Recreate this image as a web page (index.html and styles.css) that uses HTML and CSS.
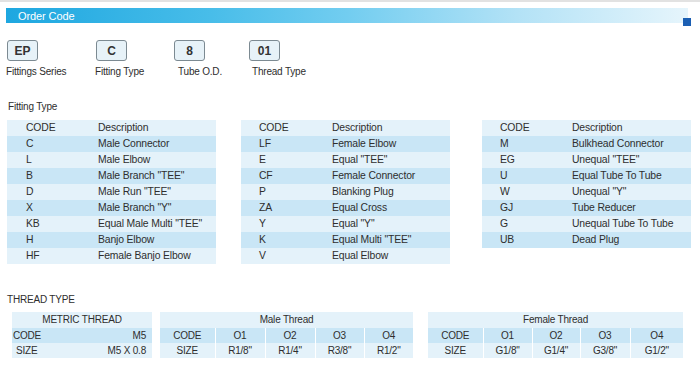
FILE: index.html
```html
<!DOCTYPE html>
<html>
<head>
<meta charset="utf-8">
<link rel="stylesheet" href="styles.css">
</head>
<body>
<div class="topline"></div>
<div class="header"><span class="header-title">Order Code</span><span class="header-mark"></span></div>

<div class="codes">
  <div class="code-item w1"><div class="code-box">EP</div><div class="code-label">Fittings Series</div></div>
  <div class="code-item w2"><div class="code-box">C</div><div class="code-label">Fitting Type</div></div>
  <div class="code-item w3"><div class="code-box">8</div><div class="code-label l3">Tube O.D.</div></div>
  <div class="code-item"><div class="code-box">01</div><div class="code-label l4">Thread Type</div></div>
</div>

<div class="section-title ft">Fitting Type</div>
<div class="fit-tables">
  <table class="fit t1">
    <tr><td>CODE</td><td>Description</td></tr>
    <tr><td>C</td><td>Male Connector</td></tr>
    <tr><td>L</td><td>Male Elbow</td></tr>
    <tr><td>B</td><td>Male Branch "TEE"</td></tr>
    <tr><td>D</td><td>Male Run "TEE"</td></tr>
    <tr><td>X</td><td>Male Branch "Y"</td></tr>
    <tr><td>KB</td><td>Equal Male Multi "TEE"</td></tr>
    <tr><td>H</td><td>Banjo Elbow</td></tr>
    <tr><td>HF</td><td>Female Banjo Elbow</td></tr>
  </table>
  <table class="fit t2">
    <tr><td>CODE</td><td>Description</td></tr>
    <tr><td>LF</td><td>Female Elbow</td></tr>
    <tr><td>E</td><td>Equal "TEE"</td></tr>
    <tr><td>CF</td><td>Female Connector</td></tr>
    <tr><td>P</td><td>Blanking Plug</td></tr>
    <tr><td>ZA</td><td>Equal Cross</td></tr>
    <tr><td>Y</td><td>Equal "Y"</td></tr>
    <tr><td>K</td><td>Equal Multi "TEE"</td></tr>
    <tr><td>V</td><td>Equal Elbow</td></tr>
  </table>
  <table class="fit t3">
    <tr><td>CODE</td><td>Description</td></tr>
    <tr><td>M</td><td>Bulkhead Connector</td></tr>
    <tr><td>EG</td><td>Unequal "TEE"</td></tr>
    <tr><td>U</td><td>Equal Tube To Tube</td></tr>
    <tr><td>W</td><td>Unequal "Y"</td></tr>
    <tr><td>GJ</td><td>Tube Reducer</td></tr>
    <tr><td>G</td><td>Unequal Tube To Tube</td></tr>
    <tr><td>UB</td><td>Dead Plug</td></tr>
  </table>
</div>

<div class="section-title tt">THREAD TYPE</div>
<div class="thread-tables">
  <table class="thr metric">
    <tr class="hd"><td colspan="2">METRIC THREAD</td></tr>
    <tr class="dk"><td class="ml">CODE</td><td class="mr">M5</td></tr>
    <tr class="lt"><td class="ml s">SIZE</td><td class="mr">M5 X 0.8</td></tr>
  </table>
  <table class="thr male">
    <colgroup><col class="c55"><col class="c50"><col class="c50"><col class="c49"><col class="c49"></colgroup>
    <tr class="hd"><td colspan="5">Male Thread</td></tr>
    <tr class="dk"><td>CODE</td><td>O1</td><td>O2</td><td>O3</td><td>O4</td></tr>
    <tr class="lt"><td>SIZE</td><td>R1/8"</td><td>R1/4"</td><td>R3/8"</td><td>R1/2"</td></tr>
  </table>
  <table class="thr female">
    <colgroup><col class="c55"><col class="c49"><col class="c48"><col class="c50"><col class="c53"></colgroup>
    <tr class="hd"><td colspan="5">Female Thread</td></tr>
    <tr class="dk"><td>CODE</td><td>O1</td><td>O2</td><td>O3</td><td>O4</td></tr>
    <tr class="lt"><td>SIZE</td><td>G1/8"</td><td>G1/4"</td><td>G3/8"</td><td>G1/2"</td></tr>
  </table>
</div>
</body>
</html>
```

FILE: styles.css
```css
html, body {
  margin: 0;
  padding: 0;
  background: #ffffff;
}
body {
  width: 700px;
  height: 378px;
  overflow: hidden;
  font-family: "Liberation Sans", Arial, sans-serif;
  color: #2e2e2e;
  font-size: 10px;
  letter-spacing: -0.2px;
}
.topline {
  height: 2px;
  background: #e2e2e2;
}
.header {
  position: relative;
  margin: 6px 12px 0 6px;
  height: 15px;
  background: linear-gradient(to right, #1ea7e0 0%, #48bde9 30%, #72cdf0 50%, #b3e2f6 75%, #e6f5fc 100%);
  display: flex;
  align-items: center;
}
.header-title {
  color: #ffffff;
  font-size: 11px;
  letter-spacing: -0.1px;
  padding-left: 12px;
}
.header-mark {
  position: absolute;
  right: -3px;
  top: 10px;
  width: 8px;
  height: 8px;
  background: #1b5fb3;
}
.codes {
  display: flex;
  margin: 17px 0 0 7px;
}
.code-item {
  display: flex;
  flex-direction: column;
  align-items: flex-start;
}
.w1 { width: 89px; }
.w2 { width: 78px; }
.w3 { width: 75px; }
.code-box {
  box-sizing: border-box;
  width: 31px;
  height: 21px;
  border: 1.5px solid #7c8a92;
  border-radius: 3px;
  background: #e7f2f8;
  font-weight: bold;
  font-size: 12px;
  color: #333;
  display: flex;
  align-items: center;
  justify-content: center;
  letter-spacing: 0;
}
.code-label {
  margin-top: 5px;
  line-height: 12px;
  margin-left: -1px;
}
.l3 { margin-left: 4px; }
.l4 { margin-left: 3px; }
.section-title {
  line-height: 12px;
  margin-left: 8px;
}
.ft { margin-top: 23px; }
.tt { margin-top: 30px; margin-left: 7px; }
.fit-tables {
  display: flex;
  align-items: flex-start;
  margin: 7px 0 0 7px;
}
table {
  border-collapse: collapse;
  border-spacing: 0;
}
.fit {
  width: 209px;
  table-layout: fixed;
  font-size: 10.4px;
  letter-spacing: -0.15px;
}
.t2 { margin-left: 25px; }
.t3 { margin-left: 32px; }
.fit td {
  height: 16px;
  padding: 0;
  line-height: 16px;
  white-space: nowrap;
}
.fit td:first-child {
  width: 73px;
  padding-left: 18px;
}
.t1 td:first-child { width: 72px; padding-left: 19px; }
.t3 td:first-child { width: 72px; padding-left: 18px; }
.fit tr:nth-child(odd) { background: #e4f2fa; }
.fit tr:nth-child(even) { background: #c9e6f6; }
.thread-tables {
  display: flex;
  align-items: flex-start;
  margin: 6px 0 0 12px;
}
.thr {
  table-layout: fixed;
}
.metric { width: 140px; }
.male { width: 253px; margin-left: 8px; }
.female { width: 255px; margin-left: 15px; }
.c55 { width: 55px; }
.c53 { width: 53px; }
.c50 { width: 50px; }
.c49 { width: 49px; }
.c48 { width: 48px; }
.thr td {
  padding: 0;
  text-align: center;
  white-space: nowrap;
  border-left: 1.5px solid #ffffff;
}
.thr td:first-child { border-left: none; }
.thr .hd td { height: 16px; line-height: 16px; background: #e4f2fa; }
.thr .dk td { height: 15px; line-height: 15px; background: #c9e6f6; }
.thr .lt td { height: 15px; line-height: 15px; background: #e4f2fa; }
.metric td { border-left: none; }
.metric .ml { text-align: left; padding-left: 1px; }
.metric .ml.s { padding-left: 4px; }
.metric .mr { text-align: right; padding-right: 6px; }
```
